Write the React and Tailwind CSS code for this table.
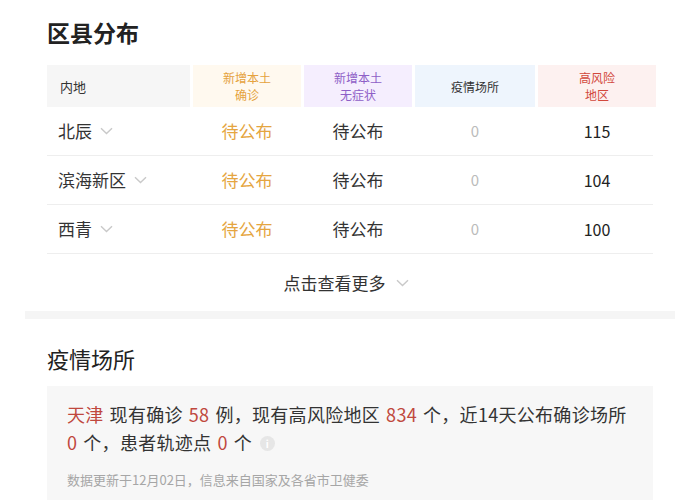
import React from "react";

const font = { fontFamily: '"Microsoft YaHei", "Noto Sans CJK SC", "Noto Sans", sans-serif' };

const Chevron = ({ className = "" }) => (
  <svg className={className} width="13" height="8" viewBox="0 0 13 8" fill="none">
    <path d="M1 1.2 L6.5 6.5 L12 1.2" stroke="#c9c9c9" strokeWidth="1.4" />
  </svg>
);

const rows = [
  { name: "北辰", hr: "115" },
  { name: "滨海新区", hr: "104" },
  { name: "西青", hr: "100" },
];

const cols = "grid grid-cols-[143px_108px_108px_120px_118px] gap-x-[3px]";

export default function App() {
  return (
    <div className="w-[700px] h-[500px] overflow-hidden bg-white text-[#333]" style={font}>
      <div className="px-[47px] pt-[17px]">
        <h2 className="text-[23px] leading-[30px] font-bold text-[#222]">区县分布</h2>

        <div className={`${cols} mt-[18px] h-[42px] text-[12px] leading-[17px]`}>
          <div className="bg-[#f6f6f6] flex items-center pl-[13px] text-[13px] text-[#333]">内地</div>
          <div className="bg-[#fff9ef] flex items-center justify-center text-center text-[#e5a23d]">
            新增本土<br />确诊
          </div>
          <div className="bg-[#f5eefe] flex items-center justify-center text-center text-[#8e5fc7]">
            新增本土<br />无症状
          </div>
          <div className="bg-[#eef5fd] flex items-center justify-center text-[#333]">疫情场所</div>
          <div className="bg-[#fdf1f0] flex items-center justify-center text-center text-[#d2483c]">
            高风险<br />地区
          </div>
        </div>

        {rows.map((r) => (
          <div key={r.name} className={`${cols} h-[49px] border-b border-[#eeeeee] text-[17px]`}>
            <div className="flex items-center pl-[11px] gap-[8px]">
              <span>{r.name}</span>
              <Chevron />
            </div>
            <div className="flex items-center justify-center text-[#e5a540]">待公布</div>
            <div className="flex items-center justify-center">待公布</div>
            <div className="flex items-center justify-center text-[#bbbbbb] text-[15px]">0</div>
            <div className="flex items-center justify-center text-[16px] text-[#222]">{r.hr}</div>
          </div>
        ))}

        <div className="h-[57px] flex items-center justify-center gap-[10px] text-[17px] pr-[8px]">
          <span>点击查看更多</span>
          <Chevron />
        </div>
      </div>

      <div className="mx-[25px] h-[8px] bg-[#f5f5f5]" />

      <div className="px-[47px] pt-[25px]">
        <h2 className="text-[22px] leading-[28px] text-[#222]">疫情场所</h2>
        <div className="mt-[14px] bg-[#f7f7f7] px-[20px] pt-[14px] pb-[14px]">
          <p className="text-[18px] leading-[28px] tracking-[0.3px] text-[#333] whitespace-nowrap">
            <span className="text-[#c0483e] mr-[6px]">天津</span>现有确诊
            <span className="text-[#c0483e] mx-[6px]">58</span>例，现有高风险地区
            <span className="text-[#c0483e] mx-[6px]">834</span>个，近14天公布确诊场所
            <br />
            <span className="text-[#c0483e] mr-[6px]">0</span>个，患者轨迹点
            <span className="text-[#c0483e] mx-[6px]">0</span>个
            <span className="inline-flex align-middle ml-[8px] mb-[3px] w-[15px] h-[15px] rounded-full bg-[#e6e6e6] items-center justify-center text-[10px] leading-none text-white font-bold">
              i
            </span>
          </p>
          <p className="mt-[16px] text-[13px] leading-[16px] text-[#a6a6a6]">
            数据更新于12月02日，信息来自国家及各省市卫健委
          </p>
        </div>
      </div>
    </div>
  );
}
